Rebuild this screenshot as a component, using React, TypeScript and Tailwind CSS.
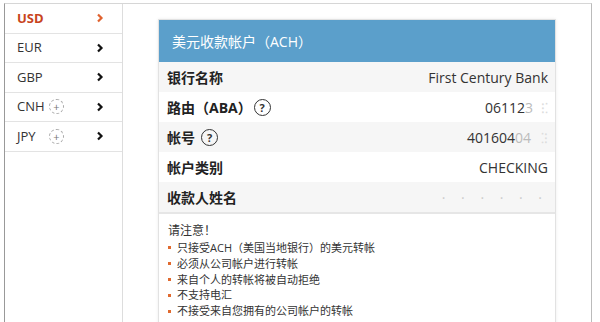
import React from 'react';

const FONT = { fontFamily: '"Open Sans", "Noto Sans CJK SC", sans-serif' };

const currencies = [
  { code: 'USD', active: true, plus: false },
  { code: 'EUR', active: false, plus: false },
  { code: 'GBP', active: false, plus: false },
  { code: 'CNH', active: false, plus: true },
  { code: 'JPY', active: false, plus: true },
];

const Chevron = ({ color }: { color: string }) => (
  <svg width="8" height="10" viewBox="0 0 8 10">
    <path d="M2 1.5 L5.5 5 L2 8.5" fill="none" stroke={color} strokeWidth="2.2" />
  </svg>
);

const PlusCircle = () => (
  <span className="inline-flex items-center justify-center w-[15px] h-[15px] rounded-full border border-dashed border-[#aaa] text-[11px] leading-none text-[#777]">+</span>
);

const Help = () => (
  <span className="inline-flex items-center justify-center w-[17px] h-[17px] rounded-full border-[1.5px] border-[#333] text-[11px] font-bold leading-none text-[#333]">?</span>
);

const rows: { label: React.ReactNode; value: React.ReactNode }[] = [
  { label: '银行名称', value: 'First Century Bank' },
  {
    label: (
      <span className="flex items-center gap-[2px]">路由（ABA）<Help /></span>
    ),
    value: (
      <span>06112<span className="text-[#bbb]">3</span><span className="text-[#ddd] ml-[8px]">⁝⁚</span></span>
    ),
  },
  {
    label: (
      <span className="flex items-center gap-[6px]">帐号<Help /></span>
    ),
    value: (
      <span>401604<span className="text-[#bbb]">04</span><span className="text-[#ddd] ml-[10px]">⁚⁝</span></span>
    ),
  },
  { label: '帐户类别', value: 'CHECKING' },
  {
    label: '收款人姓名',
    value: <span className="text-[#ccc] tracking-[6px]">· · ·  ·  · ·</span>,
  },
];

const notes = [
  '只接受ACH（美国当地银行）的美元转帐',
  '必须从公司帐户进行转帐',
  '来自个人的转帐将被自动拒绝',
  '不支持电汇',
  '不接受来自您拥有的公司帐户的转帐',
];

export default function App() {
  return (
    <div className="w-[600px] h-[322px] bg-white overflow-hidden" style={FONT}>
      <div className="ml-[4px] mt-[3px] w-[588px] h-[319px] border-t border-l border-r border-t-[#d6d6d6] border-l-[#999] border-r-[#bbb] flex">
        <div className="w-[118px] h-full border-r border-[#ddd] flex flex-col">
          {currencies.map(c => (
            <div
              key={c.code}
              className="h-[29.5px] border-b border-[#e3e3e3] flex items-center pl-[12px] pr-[18px] text-[13px]"
            >
              <span className={c.active ? 'font-bold text-[#c8441d] w-[32px]' : 'text-[#333] w-[32px]'}>{c.code}</span>
              {c.plus ? <PlusCircle /> : null}
              <span className="ml-auto flex items-center">
                <Chevron color={c.active ? '#e0622f' : '#111'} />
              </span>
            </div>
          ))}
        </div>
        <div className="flex-1 pl-[35px] pt-[15px]">
          <div className="w-[398px] border border-[#e2e2e2] shadow-[0_0_3px_rgba(0,0,0,0.08)]">
            <div className="h-[42px] bg-[#5b9fcb] flex items-center pl-[13px] text-white text-[14px]">
              美元收款帐户（ACH）
            </div>
            {rows.map((r, i) => (
              <div
                key={i}
                className={`h-[30px] flex items-center justify-between pl-[8px] pr-[7px] text-[14px] ${i % 2 === 0 ? 'bg-[#f6f6f6]' : 'bg-white'}`}
              >
                <span className="font-bold text-[#222]">{r.label}</span>
                <span className="text-[#333]">{r.value}</span>
              </div>
            ))}
            <div className="border-t-[2px] border-[#e6e6e6] pl-[9px] pt-[8px] pb-[10px]">
              <div className="text-[12px] leading-[18px] text-[#333]">请注意！</div>
              <ul className="flex flex-col">
                {notes.map(n => (
                  <li key={n} className="flex items-center text-[11px] text-[#333] leading-[15.8px]">
                    <span className="w-[3px] h-[3px] bg-[#e06a2f] mr-[6px]" />
                    {n}
                  </li>
                ))}
              </ul>
            </div>
          </div>
        </div>
      </div>
    </div>
  );
}
